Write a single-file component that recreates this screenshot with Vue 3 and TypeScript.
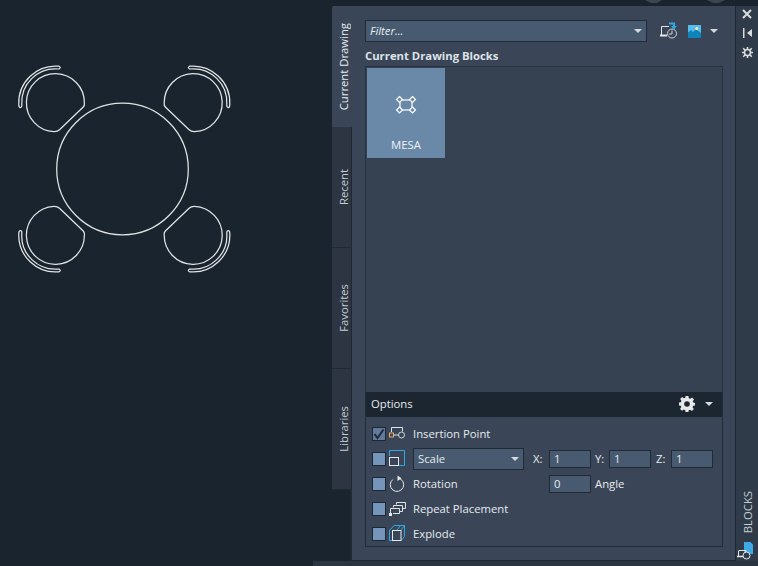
<script setup lang="ts">
const chairTransforms = [
  '',
  'translate(248.6 0) scale(-1 1)',
  'translate(0 338) scale(1 -1)',
  'translate(248.6 338) scale(-1 -1)',
]
const tabs = [
  { label: 'Current Drawing', active: true },
  { label: 'Recent', active: false },
  { label: 'Favorites', active: false },
  { label: 'Libraries', active: false },
]
const axes = ['X', 'Y', 'Z']
</script>

<template>
  <div class="app">
    <svg class="edge" width="758" height="5" viewBox="0 0 758 5">
      <path d="M645 0H662L657 3H651Z" fill="#3b4651" />
      <path d="M707 0H725L719 3H713Z" fill="#3b4651" />
    </svg>
    <div class="main">
      <div class="canvas">
        <svg class="drawing" width="332" height="561" viewBox="0 0 332 561" fill="none" stroke="#e0e4e6" stroke-width="1.25">
          <circle cx="122.500" cy="169" r="65.800" />
          <g v-for="(t, i) in chairTransforms" :key="i" :transform="t">
            <path d="M54 131.700 A29 29 0 1 1 84.400 103 Q84.800 105.500 83 107.300 L59.500 129.800 Q57.500 131.800 54 131.700 Z" />
            <path d="M59 66.200 Q61.500 67.600 59 69 A33.600 33.600 0 0 0 21.800 104.500 Q22 107.500 20.300 107.500 Q18.800 107.500 18.800 104.500 A36.800 36.800 0 0 1 59 66.200 Z" />
          </g>
        </svg>
      </div>

      <div class="palette">
        <div class="tabs">
          <div v-for="tab in tabs" :key="tab.label" class="tab" :class="{ active: tab.active }">
            <span class="tab-label">{{ tab.label }}</span>
          </div>
          <div class="tab-rest"></div>
        </div>

        <div class="panel">
          <div class="toolbar">
            <div class="filter">
              <span class="filter-text">Filter...</span>
              <span class="caret"></span>
            </div>
            <svg class="tool-icon" width="20" height="20" viewBox="0 0 20 20" fill="none">
              <path d="M9 5.500H1.500V14.500" stroke="#e4e8ea" />
              <path d="M0 14.500H7" stroke="#e4e8ea" stroke-width="2" />
              <circle cx="12" cy="12.500" r="4.500" stroke="#cfd4d8" />
              <path d="M12 9.500V13H9" stroke="#cfd4d8" />
              <path d="M9 2.500H14V6" stroke="#2aa9e6" stroke-width="2" />
              <path d="M11 5H17L14 8.500Z" fill="#2aa9e6" />
            </svg>
            <svg class="img-icon" width="13" height="13" viewBox="0 0 13 13">
              <rect width="13" height="13" fill="#58bceb" />
              <path d="M0 13V7.500L3 5L5 7L8 4.500L13 8V13Z" fill="#0f82b8" />
              <circle cx="8.800" cy="3.500" r="1.500" fill="#f5e9a8" />
            </svg>
            <span class="caret caret-tool"></span>
          </div>

          <div class="heading">Current Drawing Blocks</div>

          <div class="blocks">
            <div class="thumb">
              <svg class="thumb-icon" width="22" height="20" viewBox="0 0 22 20" fill="none" stroke="#ffffff" stroke-width="1.200">
                <rect x="5" y="5" width="12" height="10" />
                <path d="M4.500 1.500L7.500 4.500L4.500 7.500L1.500 4.500Z" fill="#6a88a8" />
                <path d="M17.500 1.500L20.500 4.500L17.500 7.500L14.500 4.500Z" fill="#6a88a8" />
                <path d="M4.500 12L7.500 15L4.500 18L1.500 15Z" fill="#6a88a8" />
                <path d="M17.500 12L20.500 15L17.500 18L14.500 15Z" fill="#6a88a8" />
              </svg>
              <span class="thumb-label">MESA</span>
            </div>
          </div>

          <div class="options">
            <div class="options-head">
              <span>Options</span>
              <svg class="gear" width="16" height="16" viewBox="0 0 16 16">
                <path fill="#e6e8ea" fill-rule="evenodd" d="M6.600 0H9.400L9.800 2.200L11.300 2.800L13.100 1.500L15 3.400L13.700 5.200L14.300 6.600L16 7V9.400L14.200 9.800L13.600 11.300L14.800 13.100L12.900 15L11.100 13.800L9.700 14.300L9.400 16H6.600L6.200 14.200L4.800 13.600L3 14.800L1.100 12.900L2.300 11.100L1.700 9.700L0 9.400V6.600L1.900 6.200L2.400 4.800L1.200 3L3.100 1.100L4.900 2.300L6.300 1.800ZM8 5.200A2.800 2.800 0 1 0 8 10.800A2.800 2.800 0 1 0 8 5.200Z" />
              </svg>
              <span class="caret caret-head"></span>
            </div>

            <div class="options-body">
              <div class="row">
                <span class="check checked">
                  <svg width="12" height="12" viewBox="0 0 12 12" fill="none"><path d="M1.500 6L4.500 10L10.500 1.500" stroke="#1f2b38" stroke-width="2" /></svg>
                </span>
                <svg class="row-icon" width="18" height="18" viewBox="0 0 18 18" fill="none">
                  <path d="M2.500 7V2.500H13.500V6.500" stroke="#dfe3e6" />
                  <rect x="0.500" y="8" width="4" height="4" stroke="#e8a866" />
                  <path d="M4.500 10H9.500" stroke="#dfe3e6" />
                  <circle cx="12.500" cy="10" r="3" stroke="#cfd4d8" />
                </svg>
                <span class="label">Insertion Point</span>
              </div>

              <div class="row">
                <span class="check"></span>
                <svg class="row-icon" width="18" height="18" viewBox="0 0 18 18" fill="none">
                  <path d="M0.500 6V0.500H15.500V15.500H10" stroke="#2aa9e6" />
                  <rect x="0.500" y="7.500" width="9" height="8" stroke="#e4e8ea" />
                </svg>
                <div class="select">
                  <span>Scale</span>
                  <span class="caret"></span>
                </div>
                <template v-for="axis in axes" :key="axis">
                  <span class="axis" :class="'axis-' + axis">{{ axis }}:</span>
                  <span class="field">1</span>
                </template>
              </div>

              <div class="row">
                <span class="check"></span>
                <svg class="row-icon" width="18" height="18" viewBox="0 0 18 18" fill="none">
                  <path d="M3.800 4.500A6.700 6.700 0 1 0 9.500 3.200" stroke="#e4e8ea" />
                  <path d="M8.500 0.500L12.500 3.200L8.500 6Z" fill="#e4e8ea" />
                </svg>
                <span class="label label-rotation">Rotation</span>
                <span class="field">0</span>
                <span class="label label-angle">Angle</span>
              </div>

              <div class="row">
                <span class="check"></span>
                <svg class="row-icon" width="18" height="18" viewBox="0 0 18 18" fill="none" stroke="#dfe3e6">
                  <path d="M7.500 4.500V2.500H16.500V8.500H14" />
                  <path d="M4.500 7.500V5.500H13.500V11.500H10" />
                  <path d="M1.500 13.500V8.500H10.500V13.500H4" />
                  <rect x="0" y="13" width="3" height="3" fill="#e4e8ea" stroke="none" />
                </svg>
                <span class="label">Repeat Placement</span>
              </div>

              <div class="row">
                <span class="check"></span>
                <svg class="row-icon" width="18" height="18" viewBox="0 0 18 18" fill="none">
                  <path d="M0.500 5.500L5 0.500H15.500V11.500L12 15.500M0.500 5.500V15.500H3M11.500 0.500L8 5M15.500 0.500L12 5" stroke="#2aa9e6" />
                  <rect x="3.500" y="5.500" width="8.500" height="10" stroke="#e4e8ea" />
                </svg>
                <span class="label">Explode</span>
              </div>
            </div>
          </div>
        </div>
      </div>

      <div class="strip">
        <svg width="10" height="10" viewBox="0 0 10 10" fill="none" stroke="#d9dcde" stroke-width="2"><path d="M1 1L9 9M9 1L1 9" /></svg>
        <svg width="9" height="10" viewBox="0 0 9 10"><path d="M0 0H1.500V10H0Z M9 1V9L4 5Z" fill="#d9dcde" /></svg>
        <svg width="11" height="11" viewBox="0 0 11 11" fill="none" stroke="#d9dcde"><path d="M5.500 0V11M0 5.500H11M1.200 1.200L9.800 9.800M9.800 1.200L1.200 9.800" stroke-width="1.600" /><circle cx="5.500" cy="5.500" r="3" stroke-width="1.600" fill="#2f3b48" /></svg>
        <span class="strip-title">BLOCKS</span>
        <svg class="strip-icon" width="17" height="18" viewBox="0 0 17 18" fill="none">
          <path d="M7 0H13.500L16 2.500V12H7Z" fill="#3fa9e6" />
          <path d="M2 8.500H9V11" stroke="#e4e8ea" />
          <path d="M1.500 8.500V14.500" stroke="#e4e8ea" />
          <path d="M0 14.500H6" stroke="#e4e8ea" stroke-width="1.500" />
          <circle cx="9.500" cy="13.500" r="3.500" stroke="#e4e8ea" fill="#2f3b48" />
        </svg>
      </div>
    </div>
    <div class="bottom"></div>
  </div>
</template>

<style scoped>
.app {
  width: 758px;
  height: 566px;
  overflow: hidden;
  position: relative;
  display: flex;
  flex-direction: column;
  background: #1a242e;
  color: #e6ebef;
  font: 11.3px/16px "Open Sans", "Liberation Sans", sans-serif;
}
.edge {
  position: absolute;
  top: 0;
  left: 0;
}
.main {
  height: 561px;
  display: flex;
}
.canvas {
  width: 332px;
  flex: none;
}
.drawing {
  display: block;
}
.palette {
  width: 404px;
  flex: none;
  margin-top: 6px;
  display: flex;
}
.tabs {
  width: 20px;
  flex: none;
  display: flex;
  flex-direction: column;
}
.tab {
  height: 121px;
  flex: none;
  background: #2c3541;
  border-bottom: 1px solid #1f2934;
  border-right: 1px solid #1f2934;
  box-sizing: border-box;
  display: flex;
  align-items: center;
  justify-content: center;
  padding-left: 4px;
}
.tab.active {
  background: #3a4657;
  border: 0;
  border-top-left-radius: 2px;
}
.tab-label {
  writing-mode: vertical-rl;
  transform: rotate(180deg);
  color: #c6ccd2;
  white-space: nowrap;
}
.active .tab-label {
  color: #e9edf0;
}
.tab-rest {
  flex: 1;
  width: 2px;
  margin-left: 18px;
  background: #202a35;
}
.panel {
  flex: 1;
  min-width: 0;
  box-sizing: border-box;
  padding: 14px 12px 13px 13px;
  background: #3a4657;
  border-right: 1px solid #1f2934;
  border-bottom: 1px solid #1f2934;
  display: flex;
  flex-direction: column;
}
.toolbar {
  height: 22px;
  flex: none;
  display: flex;
  align-items: center;
}
.filter {
  width: 282px;
  height: 22px;
  box-sizing: border-box;
  flex: none;
  background: #475a70;
  border: 1px solid #202b37;
  display: flex;
  align-items: center;
  padding: 0 4px;
}
.filter-text {
  font-style: italic;
  flex: 1;
}
.caret {
  width: 0;
  height: 0;
  border-left: 4px solid transparent;
  border-right: 4px solid transparent;
  border-top: 4px solid #d6dade;
  flex: none;
}
.tool-icon {
  margin-left: 13px;
  flex: none;
}
.img-icon {
  margin-left: 8px;
  flex: none;
}
.caret-tool {
  margin-left: 9px;
}
.heading {
  margin-top: 5px;
  font-weight: 700;
  height: 19px;
  line-height: 17px;
  color: #dde3e8;
}
.blocks {
  flex: 1;
  min-height: 0;
  background: #364152;
  border: 1px solid #28323f;
  border-bottom: 0;
  padding: 1px;
}
.thumb {
  width: 78px;
  height: 90px;
  background: #6a88a8;
  position: relative;
  display: flex;
  flex-direction: column;
  align-items: center;
}
.thumb-icon {
  margin-top: 27px;
}
.thumb-label {
  margin-top: 22px;
  color: #edf2f6;
}
.options {
  flex: none;
  height: 155px;
  display: flex;
  flex-direction: column;
  border: 1px solid #232d39;
  border-top: 0;
  box-sizing: border-box;
}
.options-head {
  height: 25px;
  flex: none;
  box-sizing: border-box;
  background: #1b2631;
  display: flex;
  align-items: center;
  padding: 0 9px 1px 5px;
}
.options-head > span:first-child {
  flex: 1;
}
.gear {
  flex: none;
}
.caret-head {
  margin-left: 10px;
}
.options-body {
  flex: 1;
  padding: 4px 0 0 6px;
}
.row {
  height: 25px;
  display: flex;
  align-items: center;
}
.check {
  width: 14px;
  height: 14px;
  box-sizing: border-box;
  flex: none;
  background: #7695ba;
  border: 1px solid #1d2835;
  display: flex;
  align-items: center;
  justify-content: center;
}
.check.checked {
  background: #62799a;
}
.row-icon {
  margin-left: 3px;
  margin-top: 1px;
  flex: none;
}
.label {
  margin-left: 6px;
  white-space: nowrap;
}
.select {
  width: 111px;
  height: 22px;
  margin-left: 6px;
  box-sizing: border-box;
  flex: none;
  background: #475a70;
  border: 1px solid #202b37;
  display: flex;
  align-items: center;
  justify-content: space-between;
  padding: 0 4px;
}
.axis {
  flex: none;
  margin-left: 9px;
  width: 16px;
}
.axis-Y,
.axis-Z {
  margin-left: 4px;
  width: 14px;
}
.axis-Z {
  margin-left: 5px;
  width: 15px;
}
.field {
  width: 42px;
  height: 18px;
  box-sizing: border-box;
  flex: none;
  background: #475a70;
  border: 1px solid #202b37;
  padding-left: 4px;
  line-height: 16px;
}
.label-rotation {
  width: 136px;
}
.label-angle {
  margin-left: 4px;
}
.strip {
  flex: 1;
  margin-top: 6px;
  background: #2f3b48;
  display: flex;
  flex-direction: column;
  align-items: center;
  gap: 9px;
  padding-top: 3px;
  box-sizing: border-box;
}
.strip-title {
  margin-top: auto;
  writing-mode: vertical-rl;
  transform: rotate(180deg);
  color: #c6ccd2;
  margin-left: 2px;
}
.strip-icon {
  flex: none;
  margin-left: -4px;
  margin-bottom: 1px;
}
.bottom {
  flex: 1;
  margin-left: 313px;
  background: #2b3541;
}
</style>
